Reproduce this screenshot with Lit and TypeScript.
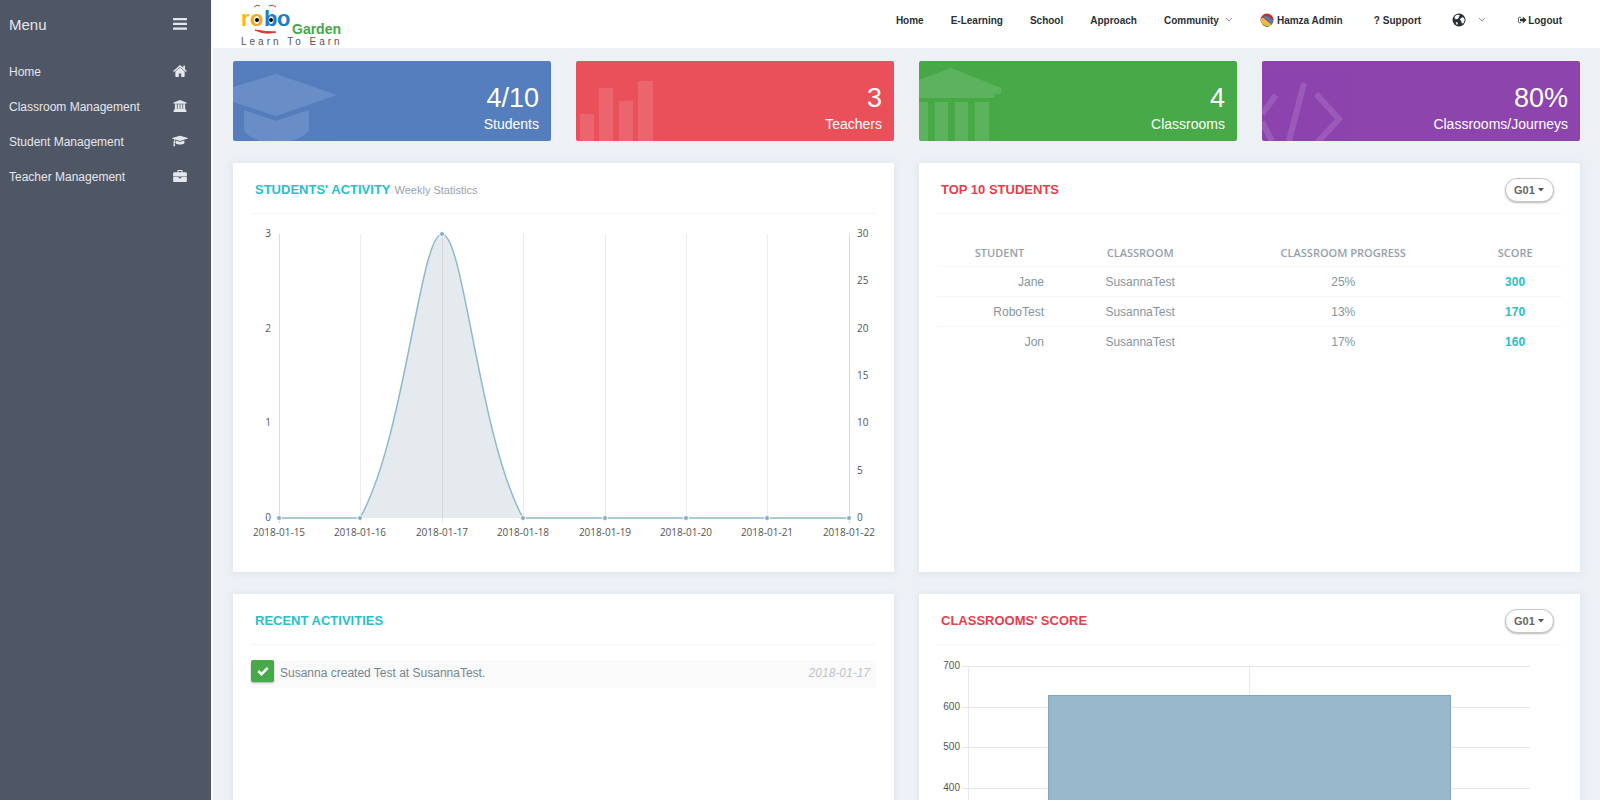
import { LitElement, html, svg, css } from "lit";
import { customElement, property } from "lit/decorators.js";

const icons: Record<string, { box: string; art: unknown }> = {
  home: {
    box: "0 0 16 14",
    art: svg`<path d="M8 0 0 7l1 1.200L8 2.200l7 6 1-1.200-2.200-2V1h-2v2.200z"/><path d="M8 3 2.600 7.700v5.500c0 .5.3.8.8.8h3.200v-4h2.800v4h3.200c.5 0 .8-.3.8-.8V7.700z"/>`,
  },
  university: {
    box: "0 0 16 14",
    art: svg`<path d="M8 0 .5 2.800v1.700h15V2.800z"/><path d="M2 5h2.400v6H2zM5.300 5h2.300v6H5.300zM8.500 5h2.300v6H8.500zM11.700 5H14v6h-2.300z"/><path d="M1.500 10.500h13V12h-13zM.5 12h15v2H.5z"/>`,
  },
  cap: {
    box: "0 0 2304 1792",
    art: svg`<path d="M1774 836l18 316q4 69-82 128t-235 93.500-323 34.500-323-34.500-235-93.500-82-128l18-316 574 181q22 7 48 7t48-7zm530-324q0 23-22 31l-1120 352q-4 1-10 1t-10-1l-652-206q-43 34-71 111.500t-34 178.500q63 36 63 109 0 69-58 107l58 433q2 14-8 25-9 11-24 11h-192q-15 0-24-11-10-11-8-25l58-433q-58-38-58-107 0-73 65-111 11-207 98-330l-333-104q-22-8-22-31t22-31l1120-352q4-1 10-1t10 1l1120 352q22 8 22 31z"/>`,
  },
  briefcase: {
    box: "0 0 16 14",
    art: svg`<path fill-rule="evenodd" d="M5 2.500V1.200C5 .5 5.500 0 6.200 0h3.600c.7 0 1.200.5 1.200 1.200v1.300h3.500c.8 0 1.500.6 1.500 1.500V7.500H0V4c0-.9.7-1.500 1.500-1.500zM6.300 2.500h3.400V1.300H6.300z"/><path d="M0 8.200h6.500V9.500h3V8.200H16v4.300c0 .9-.7 1.500-1.500 1.500h-13C.7 14 0 13.400 0 12.500z"/>`,
  },
  bars: {
    box: "0 0 14 12",
    art: svg`<rect width="14" height="2.300" rx=".5"/><rect y="4.700" width="14" height="2.300" rx=".5"/><rect y="9.400" width="14" height="2.300" rx=".5"/>`,
  },
  chevron: {
    box: "0 0 8 6",
    art: svg`<path d="m1 1 3 3 3-3" fill="none" stroke="currentColor"/>`,
  },
  globe: {
    box: "0 0 14 14",
    art: svg`<circle cx="7" cy="7" r="6.500"/><path fill="#fff" d="M3 3.200 5 1.700l2.300.2.500 1L6.500 4l.5.800L5.400 6 4 6.300 2.500 5.200zM8.500 5.500l1.800-1.300 1.900.9.4 2.400-1.200 2.700-1.500.2L9.200 8 8 6.800zM3.600 9l2 .6L5.800 11l-1 1z"/>`,
  },
  signout: {
    box: "0 0 12 10",
    art: svg`<path d="M4.500 1.500H2.700C1.900 1.500 1.500 2 1.500 2.700v4.600c0 .7.4 1.200 1.200 1.200h1.800" fill="none" stroke="currentColor"/><path d="M7 1 11.800 5 7 9V6.500H3.500v-3H7z"/>`,
  },
  check: {
    box: "0 0 12 10",
    art: svg`<path d="M1.300 5 4.500 8.200 10.700 1.800" fill="none" stroke="currentColor" stroke-width="2.600"/>`,
  },
  avatar: {
    box: "0 0 14 14",
    art: svg`<circle cx="7" cy="7" r="6.500" fill="#c9282d"/><path d="M.6 7Q1 5 3 4.500l9 7.500q-5 3-9 0Q.6 10 .6 7z" fill="#e3bd45"/><path d="M3 4.500Q6 2 9 4t4.400 4q-.4 2.600-2 4Q9 7 3 4.500z" fill="#4f7fb5"/><path d="M2 11Q7 14.500 11 12.200 7 15 3.500 12.600z" fill="#3f8f4a"/>`,
  },
};

const icon = (name: string) =>
  html`<svg class="icon ${name}" viewBox=${icons[name].box} aria-hidden="true">${icons[name].art}</svg>`;

@customElement("side-menu")
export class SideMenu extends LitElement {
  static styles = css`
    :host { display: block; background: #4f5666; color: #e6e7ea; font-size: 12px; }
    .top { display: flex; align-items: center; justify-content: space-between; height: 48px; padding: 0 24px 0 9px; font-size: 15px; }
    .toggle { padding: 0; border: 0; background: none; color: inherit; display: flex; }
    .list { list-style: none; margin: 6px 0 0; padding: 0; }
    .link { display: flex; align-items: center; justify-content: space-between; height: 35px; padding: 0 24px 0 9px; color: inherit; text-decoration: none; }
    .icon { width: 14px; height: 12px; fill: currentColor; }
    .icon.cap { width: 16px; height: 14px; }
    .slot { display: flex; justify-content: center; width: 14px; padding-bottom: 2px; }
    .slot .icon { flex: none; }
  `;
  items = [
    ["Home", "home"],
    ["Classroom Management", "university"],
    ["Student Management", "cap"],
    ["Teacher Management", "briefcase"],
  ];
  render() {
    return html`
      <div class="top"><span>Menu</span><button class="toggle" aria-label="Toggle menu">${icon("bars")}</button></div>
      <nav><ul class="list">
        ${this.items.map(([t, i]) => html`<li><a class="link" href="#">${t}<span class="slot">${icon(i)}</span></a></li>`)}
      </ul></nav>`;
  }
}

@customElement("top-bar")
export class TopBar extends LitElement {
  static styles = css`
    :host { display: flex; justify-content: space-between; align-items: flex-start; height: 48px; padding: 0 38px 0 27px; background: #fff; }
    .logo { display: block; width: 108px; height: 48px; }
    .robo { font: bold 22px "Liberation Sans", sans-serif; }
    .garden { font: bold 14px "Liberation Sans", sans-serif; fill: #45a845; }
    .motto { font: 10px "Liberation Sans", sans-serif; letter-spacing: 3px; fill: #555; }
    .nav { display: flex; align-items: center; gap: 27px; height: 40px; font: bold 10px "Liberation Sans", sans-serif; }
    .item { display: flex; align-items: center; gap: 3px; color: #2b2f36; text-decoration: none; white-space: nowrap; }
    .tool { padding-left: 4px; }
    .icon { fill: currentColor; }
    .chevron { width: 8px; height: 6px; margin-left: 3px; color: #8b9097; }
    .avatar, .globe { width: 14px; height: 14px; }
    .globe { margin-right: 6px; }
    .signout { width: 10px; height: 8px; }
    .exit { gap: 1px; }
  `;
  render() {
    return html`
      <svg class="logo" viewBox="0 0 108 48" role="img" aria-label="RoboGarden">
        <text class="robo" y="26"><tspan x="1" fill="#fbb615">r</tspan><tspan x="10" fill="#f6a81c">o</tspan><tspan x="24" fill="#1d7fc4">b</tspan><tspan x="37" fill="#1d7fc4">o</tspan></text>
        <text class="garden" x="52" y="34">Garden</text>
        <circle cx="17" cy="20" r="2"/><circle cx="31" cy="20" r="2"/>
        <path d="M14 7q3-3 6-1M29 6q4-2 7 1" fill="none" stroke="#e0322c"/>
        <path d="M15 30q10 5 21 2-10 0-21-2z" fill="#e0322c" stroke="#e0322c"/>
        <text class="motto" x="1" y="45">Learn To Earn</text>
      </svg>
      <nav class="nav">
        <a class="item" href="#">Home</a>
        <a class="item" href="#">E-Learning</a>
        <a class="item" href="#">School</a>
        <a class="item" href="#">Approach</a>
        <a class="item" href="#">Community ${icon("chevron")}</a>
        <a class="item" href="#">${icon("avatar")}Hamza Admin</a>
        <a class="item tool" href="#"><span>?</span>Support</a>
        <a class="item tool" href="#" aria-label="Language">${icon("globe")}${icon("chevron")}</a>
        <a class="item tool exit" href="#">${icon("signout")}Logout</a>
      </nav>`;
  }
}

const tileArt: Record<string, unknown> = {
  blue: svg`<path d="M0 26 43 13l61 21-61 21L0 41z"/><path d="M11 49l32 11 33-11v20q-4 7-18 11H27q-12-4-16-11z"/>`,
  red: svg`<path d="M4 53h14v27H4zM23 27h14v53H23zM43 40h14v40H43zM62 20h15v60H62z"/>`,
  green: svg`<path d="M0 19 32 7l50 20v6h-6q0 4-4 4H0zM0 41h9v39H0zM16 41h13v39H16zM36 41h13v39H36zM56 41h14v39H56z"/>`,
  purple: svg`<path d="M14 34 0 53m0 8 10 19M42 22 27 80M54 33l23 25-22 24" fill="none" stroke="#fff" stroke-width="6"/>`,
};

@customElement("stat-tile")
export class StatTile extends LitElement {
  @property() value = "";
  @property() label = "";
  @property() tone = "blue";
  static styles = css`
    :host { display: block; }
    .tile { position: relative; height: 80px; border-radius: 2px; overflow: hidden; color: #fff; text-align: right; }
    .blue { background: #557ebf; }
    .red { background: #e9505a; }
    .green { background: #47a947; }
    .purple { background: #8e44ad; }
    .art { position: absolute; left: 0; bottom: 0; width: 120px; height: 80px; fill: #fff; opacity: 0.12; }
    .body { padding: 21px 12px 0; }
    .value { font-size: 27px; line-height: 32px; }
    .label { font-size: 14px; line-height: 20px; }
  `;
  render() {
    return html`<div class="tile ${this.tone}">
      <svg class="art" viewBox="0 0 120 80" aria-hidden="true">${tileArt[this.tone]}</svg>
      <div class="body"><div class="value">${this.value}</div><div class="label">${this.label}</div></div>
    </div>`;
  }
}

@customElement("dash-panel")
export class DashPanel extends LitElement {
  @property() heading = "";
  @property() note = "";
  @property() tone = "teal";
  @property() picker = "";
  static styles = css`
    :host { display: block; min-height: 409px; background: #fff; box-shadow: 0 1px 6px 2px #e2e7ee; }
    .inner { padding: 0 18px; }
    .head { display: flex; align-items: center; justify-content: space-between; height: 50px; padding: 0 8px 0 4px; border-bottom: 1px solid #f5f6f7; }
    .title { display: flex; align-items: baseline; gap: 4px; margin: 0; padding-top: 3px; font-size: 13px; font-weight: bold; text-transform: uppercase; }
    .teal { color: #26c1c9; }
    .red { color: #e73d4a; }
    .note { color: #97a3ad; font-size: 11px; font-weight: normal; text-transform: none; }
    .pick { position: relative; display: flex; align-items: center; margin-top: 4px; }
    .select { appearance: none; width: 49px; height: 24px; margin: 0; padding: 0 8px; border: 1px solid #c4c6c9; border-radius: 12px; background: #fff; box-shadow: 0 1px 2px #b5b8bc; color: #666; font: bold 11px "Liberation Sans", sans-serif; }
    .caret { position: absolute; right: 10px; width: 6px; height: 4px; fill: #555; pointer-events: none; }
  `;
  render() {
    return html`<section class="inner">
      <header class="head">
        <h2 class="title ${this.tone}">${this.heading}${this.note ? html`<small class="note">${this.note}</small>` : ""}</h2>
        ${this.picker
          ? html`<label class="pick"><select class="select" aria-label="Group"><option>${this.picker}</option></select>
              <svg class="caret" viewBox="0 0 6 4" aria-hidden="true"><path d="M0 0h6L3 3.500z"/></svg></label>`
          : ""}
      </header>
      <slot></slot>
    </section>`;
  }
}

@customElement("activity-chart")
export class ActivityChart extends LitElement {
  static styles = css`
    :host { display: block; }
    .chart { display: block; width: 100%; overflow: visible; }
    .lab { font: 10px "Open Sans", sans-serif; fill: #555; }
    .end { text-anchor: end; }
    .mid { text-anchor: middle; }
    .grid { stroke: #000; stroke-opacity: 0.08; }
    .axis { stroke: #d8dade; }
    .area { fill: #e4eaee; }
    .line { fill: none; stroke: #8fb8cd; stroke-width: 1.5; }
    .dot { fill: #7fafc8; stroke: #fff; }
  `;
  render() {
    const xs = [0, 1, 2, 3, 4, 5, 6, 7].map((i) => Math.round(28 + i * 81.4));
    const top = 20, base = 304;
    const hump = `M109 ${base}C154 224 169 ${top} 191 ${top}S228 224 272 ${base}`;
    return html`<svg class="chart" viewBox="0 0 625 340" role="img" aria-label="Weekly student activity">
      <path class="area" d="${hump}z"></path>
      ${xs.map((x, i) => svg`<line class=${i % 7 ? "grid" : "axis"} x1=${x + 0.5} x2=${x + 0.5} y1=${top} y2=${base + 5}/>`)}
      <path class="line" d="M28 ${base}H109"></path><path class="line" d=${hump}></path><path class="line" d="M272 ${base}H598"></path>
      ${xs.map((x, i) => svg`<circle class="dot" cx=${x} cy=${i === 2 ? top : base} r="2.500"/>
        <text class="lab mid" x=${x} y="322">2018-01-${15 + i}</text>`)}
      ${[3, 2, 1, 0].map((v, i) => svg`<text class="lab end" x="20" y=${Math.round(23 + i * 94.7)}>${v}</text>`)}
      ${[30, 25, 20, 15, 10, 5, 0].map((v, i) => svg`<text class="lab" x="606" y=${Math.round(23 + i * 47.3)}>${v}</text>`)}
    </svg>`;
  }
}

@customElement("score-chart")
export class ScoreChart extends LitElement {
  static styles = css`
    :host { display: block; }
    .chart { display: block; width: 100%; }
    .lab { font: 10px "Liberation Sans", sans-serif; fill: #555; text-anchor: end; }
    .grid { stroke: #e8e8e8; }
    .bar { fill: #98b9cc; stroke: #82a7bc; }
  `;
  render() {
    return html`<svg class="chart" viewBox="0 0 625 330" role="img" aria-label="Score by classroom">
      ${[700, 600, 500, 400, 300, 200, 100, 0].map((v, i) => {
        const y = Math.round(21 + i * 40.5);
        return svg`<line class="grid" x1="25" x2="593" y1=${y + 0.5} y2=${y + 0.5}/><text class="lab" x="23" y=${y + 3}>${v}</text>`;
      })}
      <line class="grid" x1="31.500" x2="31.500" y1="21" y2="305"/><line class="grid" x1="312.500" x2="312.500" y1="21" y2="305"/>
      <rect class="bar" x="111.500" y="50.500" width="402" height="254"/>
    </svg>`;
  }
}

@customElement("app-root")
export class AppRoot extends LitElement {
  static styles = css`
    :host { display: grid; grid-template-columns: 211px 1fr; height: 100vh; background: #edf1f6; font-family: "Liberation Sans", Arial, sans-serif; }
    .main { overflow-y: auto; scrollbar-width: none; border-left: 2px solid #fafbfc; }
    .content { display: grid; grid-template-columns: repeat(4, 1fr); column-gap: 25px; row-gap: 22px; padding: 13px 20px 22px; }
    .wide { grid-column: span 2; }
    .table { width: 100%; table-layout: fixed; border-collapse: collapse; margin-top: 24px; color: #8594a0; font-size: 12px; text-align: center; }
    .table th { height: 28px; padding: 0; color: #93a1ad; font: 600 11px "Open Sans", sans-serif; text-transform: uppercase; }
    .table td { height: 29px; padding: 0; border-top: 1px solid #f6f7f8; }
    .c1 { width: 20%; }
    .c2 { width: 25%; }
    .c3 { width: 40%; }
    .c4 { width: 15%; }
    .table .name { padding-right: 18px; text-align: right; }
    .score { color: #26c1c9; font-weight: bold; }
    .feed { list-style: none; margin: 15px 0 0; padding: 0; font-size: 12px; color: #77858f; }
    .entry { display: flex; align-items: flex-start; height: 28px; background: #fafafa; }
    .mark { display: flex; align-items: center; justify-content: center; width: 23px; height: 22px; margin-right: 6px; border-radius: 2px; background: #47a947; color: #fff; box-shadow: 0 1px 2px #a9adb1; }
    .icon { width: 12px; height: 10px; fill: currentColor; }
    .text { flex: 1; line-height: 27px; }
    .date { padding-right: 6px; line-height: 27px; font-style: italic; color: #bdc3c8; }
  `;
  stats = [
    ["4/10", "Students", "blue"],
    ["3", "Teachers", "red"],
    ["4", "Classrooms", "green"],
    ["80%", "Classrooms/Journeys", "purple"],
  ];
  rows = [
    ["Jane", "SusannaTest", "25%", "300"],
    ["RoboTest", "SusannaTest", "13%", "170"],
    ["Jon", "SusannaTest", "17%", "160"],
  ];
  render() {
    return html`
      <side-menu></side-menu>
      <div class="main">
        <top-bar></top-bar>
        <main class="content">
          ${this.stats.map(([v, l, t]) => html`<stat-tile value=${v} label=${l} tone=${t}></stat-tile>`)}
          <dash-panel class="wide" heading="Students' Activity" note="Weekly Statistics"><activity-chart></activity-chart></dash-panel>
          <dash-panel class="wide" heading="Top 10 Students" tone="red" picker="G01">
            <table class="table">
              <thead><tr><th class="c1">Student</th><th class="c2">Classroom</th><th class="c3">Classroom Progress</th><th class="c4">Score</th></tr></thead>
              <tbody>${this.rows.map(([n, c, p, s]) => html`<tr><td class="name">${n}</td><td>${c}</td><td>${p}</td><td class="score">${s}</td></tr>`)}</tbody>
            </table>
          </dash-panel>
          <dash-panel class="wide" heading="Recent Activities">
            <ul class="feed"><li class="entry"><span class="mark">${icon("check")}</span><span class="text">Susanna created Test at SusannaTest.</span><time class="date">2018-01-17</time></li></ul>
          </dash-panel>
          <dash-panel class="wide" heading="Classrooms' Score" tone="red" picker="G01"><score-chart></score-chart></dash-panel>
        </main>
      </div>`;
  }
}
